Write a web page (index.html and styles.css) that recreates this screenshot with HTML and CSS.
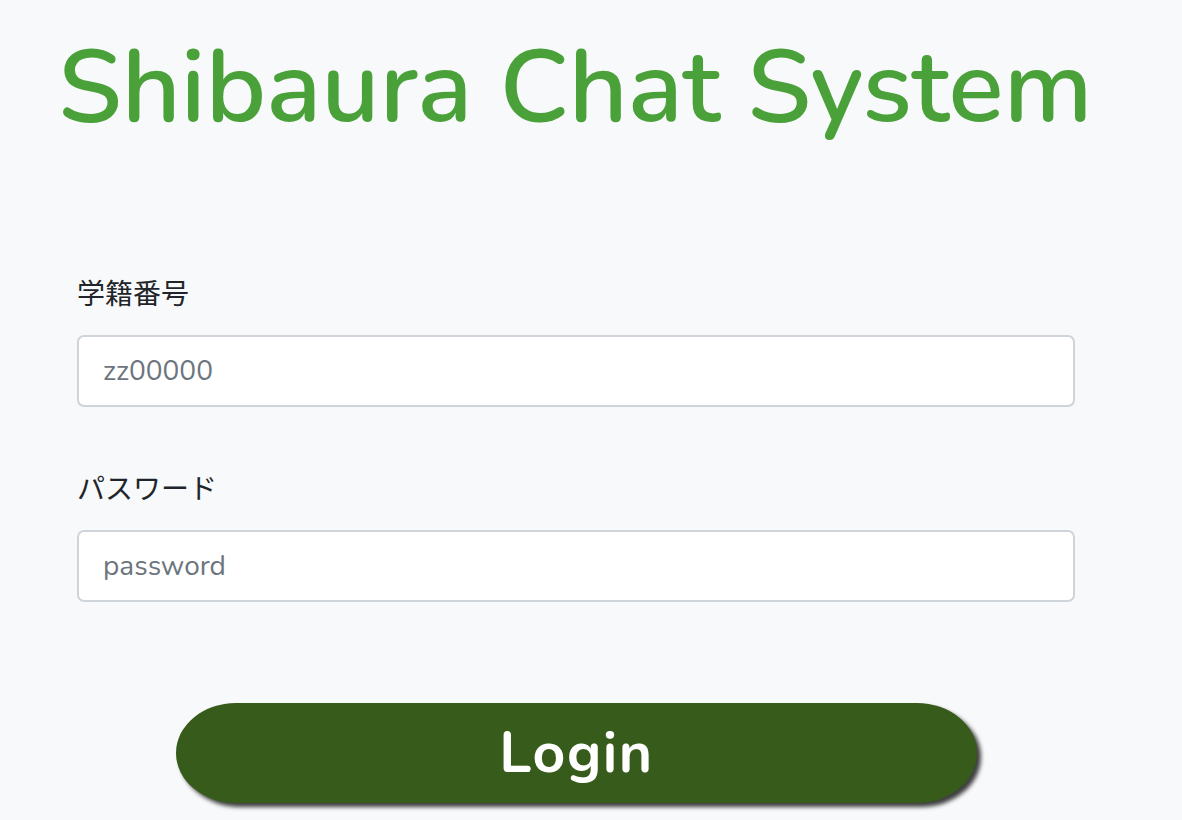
FILE: index.html
```html
<!DOCTYPE html>
<html lang="ja">
<head>
<meta charset="utf-8">
<title>Shibaura Chat System</title>
<link rel="stylesheet" href="styles.css">
</head>
<body>
<div class="page">
  <h1 class="title">Shibaura Chat System</h1>
  <form class="form">
    <div class="field">
      <label class="label" for="sid">学籍番号</label>
      <input class="input" id="sid" type="text" placeholder="zz00000">
    </div>
    <div class="field">
      <label class="label" for="pw">パスワード</label>
      <input class="input" id="pw" type="password" placeholder="password">
    </div>
    <div class="actions">
      <button class="login" type="button">Login</button>
    </div>
  </form>
</div>
</body>
</html>
```
FILE: styles.css
```css
html, body {
  margin: 0;
  padding: 0;
  background: #f8f9fa;
}
body {
  font-family: "Nunito", "Noto Sans", "Noto Sans CJK JP", sans-serif;
  color: #212529;
}
.page {
  width: 1182px;
  height: 820px;
  overflow: hidden;
  display: flex;
  flex-direction: column;
}
.title {
  margin: 25px 0 0 58px;
  font-family: "Nunito", "Noto Sans", sans-serif;
  font-weight: 600;
  font-size: 102.5px;
  line-height: 125px;
  color: #4aa13a;
  white-space: nowrap;
}
.form {
  margin: 0;
  padding: 0 107px 0 77px;
  display: flex;
  flex-direction: column;
}
.field {
  display: flex;
  flex-direction: column;
}
.field + .field {
  margin-top: 63px;
}
.form .field:first-child {
  margin-top: 125px;
}
.label {
  font-family: "Noto Sans CJK JP", sans-serif;
  font-size: 28px;
  line-height: 34px;
  margin-bottom: 26px;
  color: #212529;
}
.input {
  box-sizing: border-box;
  height: 72px;
  width: 998px;
  border: 2px solid #ced4da;
  border-radius: 7px;
  background: #fff;
  padding: 0 24px;
  font-family: "Nunito", "Noto Sans", sans-serif;
  font-size: 28px;
  color: #495057;
  outline: none;
}
.input::placeholder {
  color: #6c757d;
}
.actions {
  display: flex;
  padding-left: 99px;
  margin-top: 101px;
}
.login {
  width: 801px;
  height: 100px;
  border: none;
  border-radius: 60px / 50px;
  background: #375b1a;
  color: #fff;
  font-family: "Nunito", "Noto Sans", sans-serif;
  font-weight: 700;
  font-size: 57px;
  letter-spacing: 1.5px;
  box-shadow: 4px 4px 4px rgba(0, 0, 0, 0.75);
  cursor: pointer;
}
```
